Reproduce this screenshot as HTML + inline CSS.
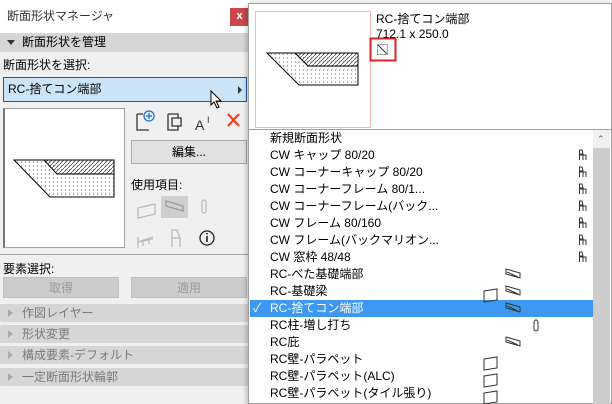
<!DOCTYPE html>
<html><head><meta charset="utf-8"><style>
*{box-sizing:border-box;margin:0;padding:0}
body{width:612px;height:404px;overflow:hidden;background:#f0f0f0;font-family:"Liberation Sans","Noto Sans CJK JP",sans-serif;font-size:12px;color:#000;position:relative}
.a{position:absolute}
.btn{position:absolute;background:#e1e1e1;border:1px solid #adadad;text-align:center;line-height:20px}
.sec{position:absolute;left:0;width:248px;height:18px;background:#d6d6d6;color:#7a7a7a;line-height:18px;padding-left:22px;border-radius:2px}
.sec:before{content:"";position:absolute;left:8px;top:5px;border-left:5px solid #aaa;border-top:4px solid transparent;border-bottom:4px solid transparent}
.row{position:absolute;left:20px;height:17px;line-height:17px;white-space:nowrap}
</style></head><body>
<div class="a" style="left:0;top:0;width:250px;height:33px;background:#fff"></div>
<div class="a" style="left:7px;top:7px;font-size:12px;color:#333">断面形状マネージャ</div>
<div class="a" style="left:230px;top:8px;width:19px;height:18px;background:#c9464a;color:#fff;font-size:11px;text-align:center;line-height:17px;font-weight:bold">x</div>
<div class="a" style="left:0;top:33px;width:250px;height:19px;background:#d6d6d6;line-height:19px;padding-left:22px">断面形状を管理</div>
<div class="a" style="left:7px;top:40px;border-top:5px solid #333;border-left:4px solid transparent;border-right:4px solid transparent"></div>
<div class="a" style="left:3px;top:56px">断面形状を選択:</div>
<div class="a" style="left:3px;top:77px;width:244px;height:25px;background:#cce4f7;border:1px solid #1c5c9c;line-height:22px;padding-left:4px">RC-捨てコン端部</div>
<div class="a" style="left:238px;top:86px;border-left:4px solid #333;border-top:4px solid transparent;border-bottom:4px solid transparent"></div>
<svg class="a" style="left:210px;top:90px" width="14" height="20"><path d="M1 1 L1 15 L4 12 L7 18 L9 17 L6 11 L11 11 Z" fill="#fff" stroke="#000"/></svg>
<div class="a" style="left:3px;top:108px;width:122px;height:140px;background:#fff;border:1px solid #a0a0a0;border-left:2px solid #777"></div>
<svg class="a" style="left:0;top:0" width="250" height="404">
<defs><pattern id="h1" width="4" height="4" patternUnits="userSpaceOnUse"><path d="M0 4 L4 0" stroke="#444" stroke-width=".7"/></pattern>
<pattern id="h2" width="4" height="4" patternUnits="userSpaceOnUse"><rect width="4" height="4" fill="#fff"/><path d="M1 3 L2 1" stroke="#888" stroke-width=".8"/></pattern></defs>
<path d="M14 160 L114 160 L114 197 L50 197 Z" fill="url(#h2)" stroke="#000"/>
<path d="M44 160 L114 160 L114 174 L57 174 Z" fill="url(#h1)" stroke="#000"/>
</svg>
<svg class="a" style="left:135px;top:110px" width="120" height="145" fill="none" stroke="#333" stroke-width="1.3">
<path d="M2 4 L2 20 L14 20 M2 4 L8 4"/><circle cx="14" cy="6" r="5" stroke="#1a73d0"/><path d="M14 3 V9 M11 6 H17" stroke="#1a73d0"/>
<path d="M33 4 H43 V8 M33 4 V20 H43 V16 M37 8 H46 V16 H37 Z"/>
<text x="60" y="20" font-size="14" fill="#333" stroke="none" font-family="Liberation Sans">A</text><text x="72" y="13" font-size="9" fill="#333" stroke="none">I</text>
<path d="M93 4 L104 16 M104 4 L93 16" stroke="#f04020" stroke-width="2.2"/>
<path d="M3 98 L20 94 L20 104 L3 108 Z" stroke="#bbb"/>
<rect x="26" y="86" width="27" height="22" fill="#cfcfcf" stroke="none"/>
<path d="M31 91 L48 96 L48 101 L31 96 Z" stroke="#999"/>
<rect x="67" y="90" width="4" height="13" rx="2" stroke="#bbb"/>
<path d="M3 132 L18 127 M3 127 V138 M8 130 V136 M14 128 V134 M3 132 L18 129" stroke="#bbb"/>
<path d="M37 128 V120 H42 L45 128 V137 M37 128 H45 M37 128 V137" stroke="#bbb"/>
<circle cx="72" cy="128" r="7" stroke="#222"/><path d="M72 126 V132 M72 123 V124.5" stroke="#222" stroke-width="1.6"/>
</svg>
<div class="btn" style="left:131px;top:140px;width:116px;height:24px;line-height:22px">編集...</div>
<div class="a" style="left:131px;top:176px">使用項目:</div>
<div class="a" style="left:0;top:254px;width:248px;height:1px;background:#a0a0a0"></div>
<div class="a" style="left:3px;top:260px">要素選択:</div>
<div class="btn" style="left:3px;top:277px;width:116px;height:21px;color:#999;background:#ccc;border-color:#bfbfbf">取得</div>
<div class="btn" style="left:131px;top:277px;width:116px;height:21px;color:#999;background:#ccc;border-color:#bfbfbf">適用</div>
<div class="sec" style="top:304px">作図レイヤー</div>
<div class="sec" style="top:325px">形状変更</div>
<div class="sec" style="top:346px">構成要素-デフォルト</div>
<div class="sec" style="top:368px">一定断面形状輪郭</div>

<div class="a" style="left:248px;top:3px;width:364px;height:401px;background:#fff;border:1px solid #a0a0a0;box-shadow:-2px 2px 4px rgba(0,0,0,.2)"></div>
<div class="a" style="left:255px;top:11px;width:116px;height:117px;border:1px solid #f4b8b8"></div>
<svg class="a" style="left:250px;top:0" width="362" height="404">
<defs><pattern id="h2b" width="4" height="4" patternUnits="userSpaceOnUse"><rect width="4" height="4" fill="#fff"/><path d="M1 3 L2 1" stroke="#888" stroke-width=".8"/></pattern>
<pattern id="h1b" width="4" height="4" patternUnits="userSpaceOnUse"><path d="M0 4 L4 0" stroke="#444" stroke-width=".7"/></pattern></defs>
<path d="M17 53 L108 53 L108 85 L49 85 Z" fill="url(#h2b)" stroke="#000"/>
<path d="M45 53 L108 53 L108 66 L58 66 Z" fill="url(#h1b)" stroke="#000"/>
<rect x="120.5" y="38.5" width="25" height="22" fill="none" stroke="#e02020" stroke-width="2"/>
<rect x="127.5" y="44.5" width="10" height="10" fill="none" stroke="#555" stroke-dasharray="1 1"/><path d="M128 45 L137 54" stroke="#333"/>
</svg>
<div class="a" style="left:376px;top:10px">RC-捨てコン端部</div>
<div class="a" style="left:376px;top:27px">712.1 x 250.0</div>
<div class="a" style="left:249px;top:129px;width:362px;height:1px;background:#a0a0a0"></div>
<div class="a" style="left:250px;top:300px;width:343px;height:17px;background:#3c98f0"></div>
<div class="a" style="left:593px;top:130px;width:17px;height:274px;background:#f0f0f0"></div>
<div class="a" style="left:593px;top:148px;width:17px;height:256px;background:#cdcdcd"></div>
<div class="a" style="left:597px;top:134px;font-size:9px;color:#555">&#8963;</div>
<div class="a" style="left:250px;top:0;font-size:12px">
<div class="row" style="top:130px">新規断面形状</div>
<div class="row" style="top:147px">CW キャップ 80/20</div>
<div class="row" style="top:164px">CW コーナーキャップ 80/20</div>
<div class="row" style="top:181px">CW コーナーフレーム 80/1...</div>
<div class="row" style="top:198px">CW コーナーフレーム(バック...</div>
<div class="row" style="top:215px">CW フレーム 80/160</div>
<div class="row" style="top:232px">CW フレーム(バックマリオン...</div>
<div class="row" style="top:249px">CW 窓枠 48/48</div>
<div class="row" style="top:266px">RC-べた基礎端部</div>
<div class="row" style="top:283px">RC-基礎梁</div>
<div class="row" style="top:300px;color:#fff">RC-捨てコン端部</div>
<div class="row" style="top:300px;left:3px;color:#fff">✓</div>
<div class="row" style="top:317px">RC柱-増し打ち</div>
<div class="row" style="top:334px">RC庇</div>
<div class="row" style="top:351px">RC壁-パラペット</div>
<div class="row" style="top:368px">RC壁-パラペット(ALC)</div>
<div class="row" style="top:385px">RC壁-パラペット(タイル張り)</div>
</div>
<svg class="a" style="left:470px;top:130px" width="120" height="274" fill="none" stroke="#333">
<g id="ch"><path d="M109.5 30 V20 H112 L113 24 H109.5 M109.5 25 H116 L116 30 M113 25 V30"/></g>
<use href="#ch" y="17"/><use href="#ch" y="34"/><use href="#ch" y="51"/><use href="#ch" y="68"/><use href="#ch" y="85"/><use href="#ch" y="102"/>
<g id="bm"><path d="M36 139 L50 143 L50 148 L36 144 Z M37 142 L48 147"/></g>
<use href="#bm" y="17"/><use href="#bm" y="34"/><use href="#bm" y="68"/>
<g id="wl"><path d="M14 161 L27 159 L27 170 L14 172 Z"/></g>
<use href="#wl" y="68"/><use href="#wl" y="85"/><use href="#wl" y="102"/>
<rect x="64" y="190" width="4" height="11" rx="2"/>
</svg>
</body></html>
